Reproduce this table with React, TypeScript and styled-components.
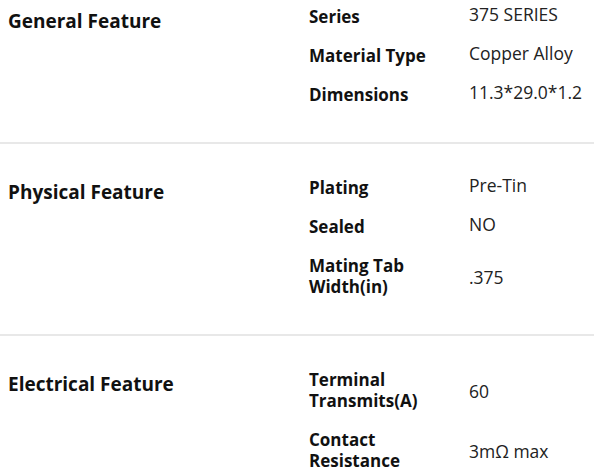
import React from "react";
import styled, { createGlobalStyle } from "styled-components";

const GlobalStyle = createGlobalStyle`
  html, body { margin: 0; padding: 0; background: #ffffff; }
  body { font-family: "Open Sans", "Noto Sans CJK KR", sans-serif; color: #111; }
`;

const Page = styled.div`
  width: 594px;
  margin-top: -27px;
`;

const Section = styled.section<{ $first?: boolean }>`
  display: grid;
  grid-template-columns: 309px 160px 1fr;
  padding: 24px 0 28px;
  border-top: ${(p) => (p.$first ? "none" : "2px solid #e8e8e8")};
`;

const Title = styled.h2`
  grid-column: 1;
  grid-row: 1 / span 10;
  margin: 0;
  padding: 11px 0 0 8px;
  font-size: 19px;
  line-height: 26px;
  font-weight: 700;
  color: #111;
`;

const Label = styled.div`
  grid-column: 2;
  display: flex;
  align-items: center;
  max-width: 140px;
  padding: 9px 0;
  font-size: 17px;
  line-height: 21px;
  font-weight: 700;
  color: #111;
`;

const Value = styled.div<{ $multi?: boolean }>`
  grid-column: 3;
  display: flex;
  align-items: center;
  padding: ${(p) => (p.$multi ? "9px 0 7px" : "7px 0 11px")};
  font-size: 17.5px;
  line-height: 21px;
  font-weight: 400;
  color: #222;
`;

type Spec = { label: string; value: string; multi?: boolean };

const sections: { title: string; specs: Spec[] }[] = [
  {
    title: "General Feature",
    specs: [
      { label: "Series", value: "375 SERIES" },
      { label: "Material Type", value: "Copper Alloy" },
      { label: "Dimensions", value: "11.3*29.0*1.2" },
    ],
  },
  {
    title: "Physical Feature",
    specs: [
      { label: "Plating", value: "Pre-Tin" },
      { label: "Sealed", value: "NO" },
      { label: "Mating Tab Width(in)", value: ".375", multi: true },
    ],
  },
  {
    title: "Electrical Feature",
    specs: [
      { label: "Terminal Transmits(A)", value: "60", multi: true },
      { label: "Contact Resistance", value: "3mΩ max", multi: true },
    ],
  },
];

export default function App() {
  return (
    <>
      <GlobalStyle />
      <Page>
        {sections.map((s, i) => (
          <Section key={s.title} $first={i === 0}>
            <Title>{s.title}</Title>
            {s.specs.map((sp) => (
              <React.Fragment key={sp.label}>
                <Label>{sp.label}</Label>
                <Value $multi={sp.multi}>{sp.value}</Value>
              </React.Fragment>
            ))}
          </Section>
        ))}
      </Page>
    </>
  );
}
